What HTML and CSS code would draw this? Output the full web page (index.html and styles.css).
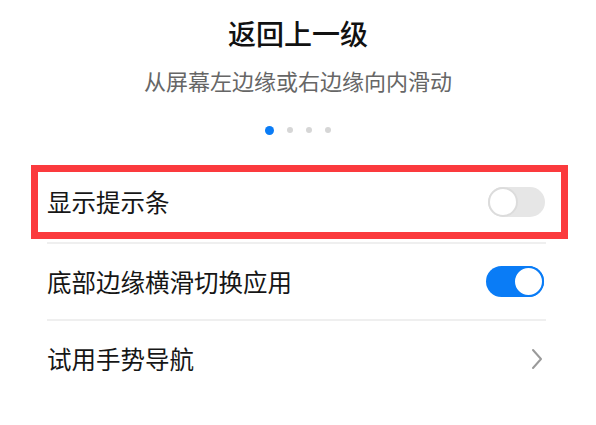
FILE: index.html
```html
<!DOCTYPE html>
<html lang="zh-CN">
<head>
<meta charset="utf-8">
<title>返回上一级</title>
<link rel="stylesheet" href="styles.css">
</head>
<body>
<div class="page">
  <header class="intro">
    <h1 class="title">返回上一级</h1>
    <p class="subtitle">从屏幕左边缘或右边缘向内滑动</p>
    <div class="dots">
      <span class="dot active"></span>
      <span class="dot"></span>
      <span class="dot"></span>
      <span class="dot"></span>
    </div>
  </header>
  <section class="list">
    <div class="row highlight">
      <span class="label">显示提示条</span>
      <span class="switch off"><span class="knob"></span></span>
    </div>
    <div class="divider"></div>
    <div class="row">
      <span class="label">底部边缘横滑切换应用</span>
      <span class="switch on"><span class="knob"></span></span>
    </div>
    <div class="divider"></div>
    <div class="row">
      <span class="label">试用手势导航</span>
      <svg class="chevron" width="12" height="22" viewBox="0 0 12 22"><path d="M2 2 L10 11 L2 20" fill="none" stroke="#9a9a9a" stroke-width="2" stroke-linecap="round" stroke-linejoin="round"/></svg>
    </div>
  </section>
</div>
</body>
</html>
```
FILE: styles.css
```css
html, body {
  margin: 0;
  padding: 0;
  background: #ffffff;
}
body {
  font-family: "Noto Sans CJK SC", "Noto Sans", sans-serif;
  color: #1a1a1a;
}
.page {
  width: 596px;
  height: 425px;
  overflow: hidden;
}
.intro {
  display: flex;
  flex-direction: column;
  align-items: center;
  padding-top: 13px;
}
.title {
  margin: 0;
  font-size: 28px;
  line-height: 40px;
  font-weight: 500;
  color: #111;
}
.subtitle {
  margin: 12px 0 0;
  font-size: 22px;
  line-height: 30px;
  color: #666;
}
.dots {
  display: flex;
  align-items: center;
  gap: 13px;
  height: 8px;
  margin-top: 31px;
}
.dot {
  width: 6px;
  height: 6px;
  border-radius: 50%;
  background: #d6d6d6;
}
.dot.active {
  width: 9px;
  height: 9px;
  background: #0a7cf6;
}
.list {
  margin-top: 31px;
  padding: 0 50px 0 47px;
}
.row {
  display: flex;
  align-items: center;
  justify-content: space-between;
  height: 75px;
}
.row.highlight {
  height: 60px;
  border: 7px solid #fb3a3d;
  margin: 0 -22px 3px -16px;
  padding: 0 16px 0 9px;
}
.label {
  font-size: 24.5px;
  line-height: 30px;
  color: #161616;
}
.divider {
  height: 2px;
  background: #efefef;
}
.switch {
  position: relative;
  width: 57px;
  height: 30px;
  border-radius: 15px;
  box-sizing: border-box;
}
.switch.off {
  background: #e6e6e6;
}
.switch.on {
  width: 58px;
  height: 31px;
  border-radius: 16px;
  margin-right: 2px;
  background: #0a7cf6;
}
.knob {
  position: absolute;
  top: 0;
  width: 30px;
  height: 30px;
  border-radius: 50%;
  background: #fff;
  box-sizing: border-box;
}
.switch.off .knob {
  left: 0;
  border: 2px solid #dcdcdc;
}
.switch.on .knob {
  right: 0;
  width: 31px;
  height: 31px;
  border: 2px solid #0a7cf6;
}
.chevron {
  margin-right: 3px;
}
```
